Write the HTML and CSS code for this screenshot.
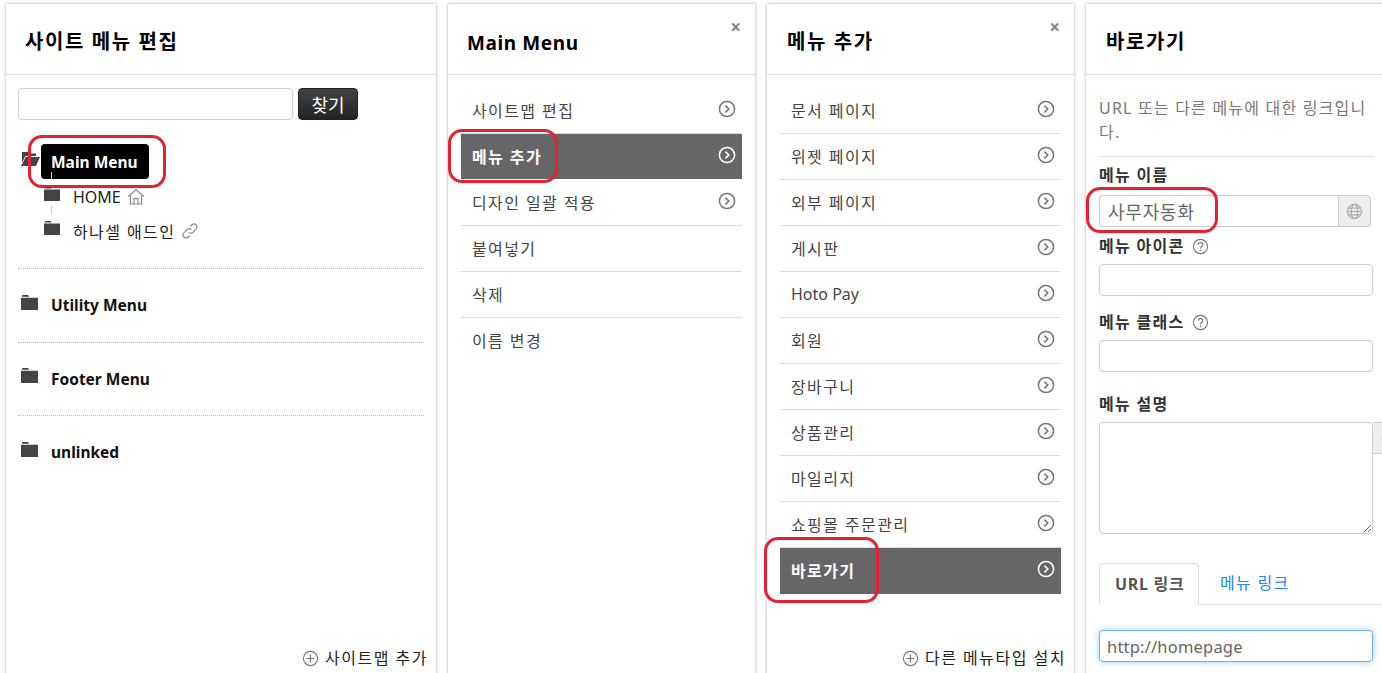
FILE: index.html
```html
<!DOCTYPE html>
<html lang="ko">
<head>
	<meta charset="utf-8">
	<title>사이트 메뉴 편집</title>
	<link rel="stylesheet" href="styles.css">
</head>
<body>
	<svg class="defs" width="0" height="0">
		<symbol id="go" viewBox="0 0 18 18">
			<circle cx="9" cy="9" r="7.6" fill="none" stroke="currentColor" stroke-width="1.5"/>
			<path d="M7.4 5.6 10.8 9l-3.4 3.4" fill="none" stroke="currentColor" stroke-width="1.6"/>
		</symbol>
		<symbol id="plus" viewBox="0 0 18 18">
			<circle cx="9" cy="9" r="7.5" fill="none" stroke="currentColor" stroke-width="1.2"/>
			<path d="M9 4.8v8.4M4.8 9h8.4" fill="none" stroke="currentColor" stroke-width="1.2"/>
		</symbol>
		<symbol id="help" viewBox="0 0 18 18">
			<circle cx="9" cy="9" r="7.5" fill="none" stroke="currentColor" stroke-width="1.2"/>
			<path d="M6.6 7.2C6.6 5.8 7.7 5 9 5s2.4.8 2.4 2.1c0 1.9-2.4 1.9-2.4 3.9" fill="none" stroke="currentColor" stroke-width="1.3"/>
			<circle cx="9" cy="13" r=".9" fill="currentColor"/>
		</symbol>
		<symbol id="folder" viewBox="0 0 16 14">
			<path d="M0 2.6h16V14H0zM1.4 0h5.2l1 1.6H.6z" fill="currentColor"/>
		</symbol>
		<symbol id="globe" viewBox="0 0 18 18">
			<g fill="none" stroke="#aaa" stroke-width="1.2"><circle cx="9" cy="9" r="7.5"/><ellipse cx="9" cy="9" rx="3.4" ry="7.5"/><path d="M1.5 9h15M2.6 5.4h12.8M2.6 12.6h12.8"/></g>
		</symbol>
	</svg>

	<div class="panels">
		<section class="panel panel-wide">
			<h2 class="panel-title">사이트 메뉴 편집</h2>
			<div class="panel-body tree-body">
				<div class="search">
					<input class="field search-input" type="text">
					<button class="search-btn">찾기</button>
				</div>

				<div class="tree-group first-group">
					<div class="tree-root">
						<svg class="folder-open" viewBox="0 0 20 15"><path d="M2 3.4V1h6l1 1.4h7V5H5.4L2 11.4zM5.8 6H20l-4 9H1z" fill="#444"/></svg>
						<span class="root-tag mark-root">Main Menu</span>
					</div>
					<div class="tree-child home-row">
						<svg class="folder"><use href="#folder"/></svg>
						<span class="latin">HOME</span>
						<svg class="tail-icon" viewBox="0 0 18 18"><path d="M1 8.6 9 1.8l8 6.8M3.4 7.4V16h11.2V7.4M7 16v-5.4h4V16M5.4 16h7.2" fill="none" stroke="#888" stroke-width="1.2"/></svg>
					</div>
					<div class="tree-child link-row">
						<svg class="folder"><use href="#folder"/></svg>
						<span>하나셀 애드인</span>
						<svg class="tail-icon" viewBox="0 0 18 18"><path d="M7.6 10.4a3 3 0 0 0 4.3 0l3.2-3.2A3 3 0 0 0 10.8 3L9.4 4.4M10.4 7.6a3 3 0 0 0-4.3 0l-3.2 3.2A3 3 0 0 0 7.2 15l1.4-1.4" fill="none" stroke="#888" stroke-width="1.2"/></svg>
					</div>
				</div>
				<div class="tree-group">
					<svg class="folder root-folder"><use href="#folder"/></svg>
					<strong>Utility Menu</strong>
				</div>
				<div class="tree-group">
					<svg class="folder root-folder"><use href="#folder"/></svg>
					<strong>Footer Menu</strong>
				</div>
				<div class="tree-group last-group">
					<svg class="folder root-folder"><use href="#folder"/></svg>
					<strong>unlinked</strong>
				</div>
			</div>
			<a class="panel-foot"><svg class="foot-icon"><use href="#plus"/></svg>사이트맵 추가</a>
		</section>

		<section class="panel">
			<span class="close">×</span>
			<h2 class="panel-title latin-title">Main Menu</h2>
			<ul class="menu-list">
				<li>사이트맵 편집<svg class="go"><use href="#go"/></svg></li>
				<li class="active"><span class="mark-add">메뉴 추가</span><svg class="go"><use href="#go"/></svg></li>
				<li>디자인 일괄 적용<svg class="go"><use href="#go"/></svg></li>
				<li>붙여넣기</li>
				<li>삭제</li>
				<li>이름 변경</li>
			</ul>
		</section>

		<section class="panel">
			<span class="close">×</span>
			<h2 class="panel-title">메뉴 추가</h2>
			<ul class="menu-list">
				<li>문서 페이지<svg class="go"><use href="#go"/></svg></li>
				<li>위젯 페이지<svg class="go"><use href="#go"/></svg></li>
				<li>외부 페이지<svg class="go"><use href="#go"/></svg></li>
				<li>게시판<svg class="go"><use href="#go"/></svg></li>
				<li><span class="latin">Hoto Pay</span><svg class="go"><use href="#go"/></svg></li>
				<li>회원<svg class="go"><use href="#go"/></svg></li>
				<li>장바구니<svg class="go"><use href="#go"/></svg></li>
				<li>상품관리<svg class="go"><use href="#go"/></svg></li>
				<li>마일리지<svg class="go"><use href="#go"/></svg></li>
				<li>쇼핑몰 주문관리<svg class="go"><use href="#go"/></svg></li>
				<li class="active"><span class="mark-link">바로가기</span><svg class="go"><use href="#go"/></svg></li>
			</ul>
			<a class="panel-foot"><svg class="foot-icon"><use href="#plus"/></svg>다른 메뉴타입 설치</a>
		</section>

		<section class="panel">
			<h2 class="panel-title">바로가기</h2>
			<div class="panel-body form-body">
				<p class="desc">URL 또는 다른 메뉴에 대한 링크입니다.</p>
				<label class="label name-label">메뉴 이름</label>
				<div class="input-group mark-name">
					<input class="field group-input" type="text" value="사무자동화">
					<span class="addon"><svg class="globe"><use href="#globe"/></svg></span>
				</div>
				<label class="label icon-label">메뉴 아이콘<svg class="help"><use href="#help"/></svg></label>
				<input class="field" type="text">
				<label class="label class-label">메뉴 클래스<svg class="help"><use href="#help"/></svg></label>
				<input class="field" type="text">
				<label class="label desc-label">메뉴 설명</label>
				<div class="area-row">
					<textarea class="field area"></textarea>
					<span class="addon area-addon"><svg class="globe"><use href="#globe"/></svg></span>
				</div>
				<div class="tabs">
					<span class="tab tab-on">URL 링크</span>
					<span class="tab">메뉴 링크</span>
				</div>
				<input class="field url-input" type="text" value="http://homepage">
			</div>
		</section>
	</div>
</body>
</html>
```

FILE: styles.css
```css
html, body {
	height: 673px;
	overflow: hidden;
}

body {
	margin: 0;
	background: #fff;
	color: #333;
	font-family: "Noto Sans", "Noto Sans CJK KR", sans-serif;
	font-size: 16px;
	letter-spacing: 1.4px;
}

.defs {
	position: absolute;
}

.latin {
	letter-spacing: 0;
}

.panels {
	display: flex;
	gap: 12px;
	height: 669px;
	padding: 4px 0 0 6px;
}

.panel {
	position: relative;
	flex: 0 0 307px;
	box-sizing: border-box;
	width: 307px;
	height: 700px;
	background: #fff;
	box-shadow: 0 0 3px rgba(0, 0, 0, 0.35);
}

.panel-wide {
	flex-basis: 430px;
	width: 430px;
}

.panel-title {
	box-sizing: border-box;
	height: 71px;
	margin: 0;
	padding: 24px 20px 0;
	border-bottom: 1px solid #ddd;
	color: #000;
	font-size: 20px;
	font-weight: 700;
	letter-spacing: 1.6px;
	line-height: 28px;
}

.panel-wide .panel-title {
	padding-left: 19px;
}

.latin-title {
	padding: 25px 19px 0;
	font-size: 19px;
	letter-spacing: 0.6px;
}

.close {
	position: absolute;
	top: 13px;
	right: 14px;
	color: #888;
	font-size: 19px;
	font-weight: 700;
	letter-spacing: 0;
	line-height: 20px;
}

.panel-foot {
	position: absolute;
	top: 643px;
	right: 8px;
	display: flex;
	align-items: center;
	color: #222;
	letter-spacing: 1.5px;
	line-height: 22px;
}

.foot-icon {
	width: 17px;
	height: 17px;
	margin-right: 6px;
	color: #777;
}

/* tree */
.tree-body {
	padding: 13px 12px 0;
}

.search {
	display: flex;
	gap: 5px;
}

.field {
	display: block;
	box-sizing: border-box;
	width: 274px;
	height: 32px;
	padding: 0 8px;
	border: 1px solid #ccc;
	border-radius: 4px;
	outline: none;
	background: #fff;
	color: #666;
	font: inherit;
	font-size: 16px;
}

.search-input {
	width: 275px;
}

.search-btn {
	width: 60px;
	height: 32px;
	padding: 0;
	border: 1px solid #222;
	border-radius: 4px;
	background: linear-gradient(#444, #222);
	color: #fff;
	font: inherit;
	font-size: 18px;
}

.tree-group {
	display: flex;
	align-items: center;
	height: 72.5px;
	border-top: 1px dotted #bbb;
	color: #111;
}

.tree-group strong {
	font-size: 15.5px;
	letter-spacing: 0;
}

.first-group {
	display: block;
	height: 148px;
	padding-top: 24px;
	box-sizing: border-box;
	border-top: 0;
}

.tree-root {
	display: flex;
	align-items: center;
	height: 35px;
}

.folder-open {
	width: 20px;
	height: 15px;
	margin: 0 1px 6px 2px;
}

.root-tag {
	position: relative;
	padding: 1px 11px 0 10px;
	border-radius: 4px;
	background: #000;
	color: #fff;
	font-size: 15.5px;
	font-weight: 700;
	letter-spacing: 0;
	line-height: 34px;
}

.tree-child {
	position: relative;
	display: flex;
	align-items: center;
	height: 34px;
	padding-left: 26px;
	color: #222;
}

.tree-child::before {
	content: "";
	position: absolute;
	top: -8px;
	left: 33px;
	height: 8px;
	border-left: 1px solid #ccc;
}

.home-row {
	margin-top: 1px;
}

.folder {
	width: 16px;
	height: 14px;
	margin-right: 13px;
	margin-bottom: 6px;
	color: #444;
}

.root-folder {
	width: 17px;
	height: 15px;
	margin: 0 13px 6px 3px;
}

.tail-icon {
	width: 18px;
	height: 18px;
	margin-left: 6px;
}

/* menu lists */
.menu-list {
	margin: 13px 13px 0;
	padding: 0;
	list-style: none;
}

.menu-list li {
	position: relative;
	display: flex;
	align-items: center;
	justify-content: space-between;
	box-sizing: border-box;
	height: 46px;
	padding: 0 6px 2px 11px;
	border-bottom: 1px solid #ddd;
	color: #444;
}

.menu-list li:last-child {
	border-bottom: 0;
}

.menu-list .active {
	background: #666;
	border-bottom: 1px solid #fff;
	color: #fff;
	font-weight: 700;
}

.go {
	width: 18px;
	height: 18px;
	margin-bottom: 2px;
	color: #777;
}

.active .go {
	color: #fff;
}

/* form */
.form-body {
	padding: 0 13px;
}

.desc {
	width: 275px;
	margin: 0;
	padding: 21px 0 12px;
	border-bottom: 1px solid #ddd;
	color: #777;
	letter-spacing: 1.2px;
	line-height: 24px;
	word-break: break-all;
}

.label {
	display: flex;
	align-items: center;
	color: #333;
	font-weight: 700;
	letter-spacing: 1.3px;
	line-height: 20px;
}

.name-label {
	margin-top: 8px;
	margin-bottom: 10px;
}

.icon-label {
	margin-top: 9px;
	margin-bottom: 8px;
}

.class-label {
	margin-top: 16px;
	margin-bottom: 8px;
}

.desc-label {
	margin-top: 22px;
	margin-bottom: 8px;
}

.help {
	width: 17px;
	height: 17px;
	margin-left: 7px;
	color: #777;
}

.input-group {
	position: relative;
	display: flex;
	width: 272px;
}

.group-input {
	flex: 1;
	width: auto;
	min-width: 0;
	border-right: 0;
	border-radius: 4px 0 0 4px;
	font-size: 18px;
	letter-spacing: 0.8px;
}

.addon {
	display: flex;
	flex: none;
	align-items: center;
	justify-content: center;
	box-sizing: border-box;
	width: 33px;
	height: 32px;
	border: 1px solid #ccc;
	border-radius: 0 4px 4px 0;
	background: #eee;
}

.globe {
	width: 17px;
	height: 17px;
}

.area-row {
	display: flex;
	width: 310px;
}

.area {
	flex: none;
	height: 112px;
	resize: vertical;
}

.area-addon {
	border-left: 0;
}

.tabs {
	display: flex;
	width: 284px;
	height: 41px;
	margin-top: 29px;
	border-bottom: 1px solid #ddd;
}

.tab {
	box-sizing: border-box;
	height: 41px;
	padding: 0 21px;
	color: #2088f0;
	letter-spacing: 1.3px;
	line-height: 40px;
	white-space: nowrap;
}

.tab-on {
	width: 100px;
	height: 42px;
	padding: 0 15px;
	border: 1px solid #ddd;
	border-bottom: 0;
	border-radius: 4px 4px 0 0;
	background: #fff;
	color: #555;
	font-weight: 700;
	letter-spacing: 0.7px;
}

.url-input {
	margin-top: 25px;
	padding-left: 7px;
	border-color: #6db3f2;
	box-shadow: 0 0 6px rgba(82, 168, 236, 0.6);
	font-size: 16.5px;
	letter-spacing: 0.2px;
}

/* red highlights drawn over the capture */
.mark-root::after,
.mark-add::after,
.mark-link::after,
.mark-name::after {
	content: "";
	position: absolute;
	border: 3px solid #e8202f;
	border-radius: 14px;
	pointer-events: none;
}

.mark-root::after {
	top: -9px;
	right: -17px;
	bottom: -9px;
	left: -13px;
}

.mark-add::after {
	top: -5px;
	left: -13px;
	width: 104px;
	height: 48px;
}

.mark-link::after {
	top: -11px;
	left: -16px;
	width: 109px;
	height: 60px;
}

.mark-name::after {
	top: -8px;
	left: -13px;
	width: 126px;
	height: 40px;
}
```
